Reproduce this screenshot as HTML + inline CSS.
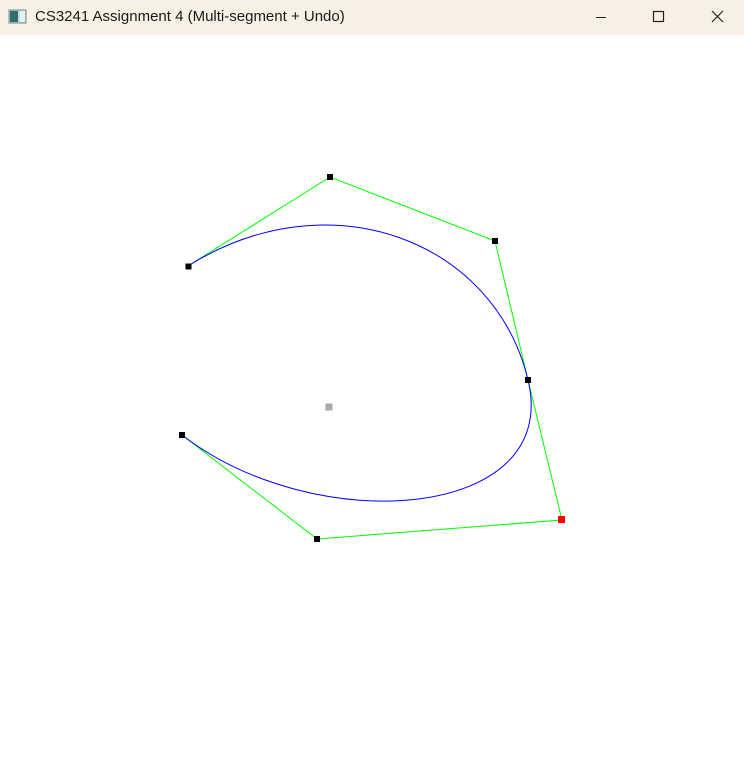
<!DOCTYPE html>
<html><head><meta charset="utf-8"><style>
html,body{margin:0;padding:0;width:744px;height:778px;overflow:hidden;background:#fff;font-family:"Segoe UI","Liberation Sans",sans-serif}
#tb{position:absolute;left:0;top:0;width:744px;height:35px;background:#f7f0e5}
#title{position:absolute;left:35px;top:8px;font-size:15px;color:#1a1a1a}
</style></head><body>
<div id="tb">
<svg width="744" height="35" style="position:absolute;left:0;top:0">
<rect x="9" y="10" width="17" height="13" fill="#c8d8d8" stroke="#6a8a8a" stroke-width="1"/>
<rect x="10" y="11" width="8" height="11" fill="#2e6e6e"/>
<rect x="20" y="11" width="5" height="11" fill="#e8eeee"/>
<line x1="596" y1="17.5" x2="606" y2="17.5" stroke="#222" stroke-width="1"/>
<rect x="653.5" y="11.5" width="10" height="10" fill="none" stroke="#222" stroke-width="1.2"/>
<path d="M712 11 L723 22 M723 11 L712 22" stroke="#222" stroke-width="1.2"/>
</svg>
<div id="title">CS3241 Assignment 4 (Multi-segment + Undo)</div>
</div>
<svg width="744" height="778" style="position:absolute;left:0;top:0">
<polyline points="188,266 330,177 495,241 528,380 562,520 317,539 182,435" fill="none" stroke="#00ff00" stroke-width="1"/>
<path d="M188,266 C330,177 495,241 528,380 C562,520 317,539 182,435" fill="none" stroke="#0000ff" stroke-width="1"/>
<g fill="#000">
<rect x="185.5" y="263.5" width="6" height="6"/>
<rect x="327" y="174" width="6" height="6"/>
<rect x="492" y="238" width="6" height="6"/>
<rect x="525" y="377" width="6" height="6"/>
<rect x="314" y="536" width="6" height="6"/>
<rect x="179" y="432" width="6" height="6"/>
</g>
<rect x="558" y="516" width="7" height="7" fill="#ff0000"/>
<rect x="325.5" y="403.5" width="7" height="7" fill="#aaaaaa"/>
</svg>
</body></html>
